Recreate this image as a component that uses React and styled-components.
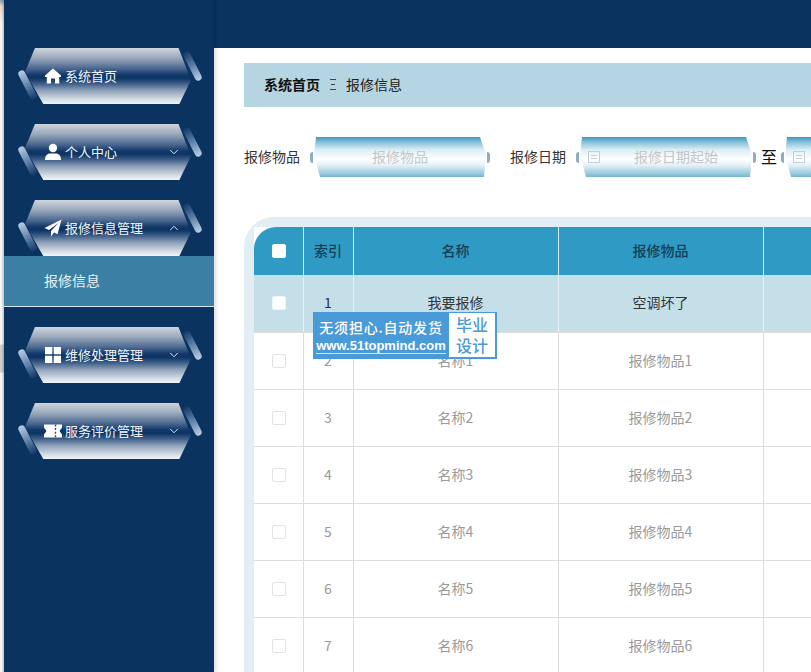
import React from "react";
import styled, { createGlobalStyle } from "styled-components";
import { ChevronDown, ChevronUp } from "lucide-react";

const FONT = `"Noto Sans CJK SC", "Noto Sans", sans-serif`;

const menus = [
  { label: "系统首页", icon: "home" },
  { label: "个人中心", icon: "user", arrow: "down" },
  { label: "报修信息管理", icon: "plane", arrow: "up", children: ["报修信息"] },
  { label: "维修处理管理", icon: "grid", arrow: "down" },
  { label: "服务评价管理", icon: "ticket", arrow: "down" },
];

const rows = [
  { index: 1, name: "我要报修", item: "空调坏了", active: true },
  { index: 2, name: "名称1", item: "报修物品1" },
  { index: 3, name: "名称2", item: "报修物品2" },
  { index: 4, name: "名称3", item: "报修物品3" },
  { index: 5, name: "名称4", item: "报修物品4" },
  { index: 6, name: "名称5", item: "报修物品5" },
  { index: 7, name: "名称6", item: "报修物品6" },
];

function MenuIcon({ name }) {
  if (name === "home") {
    return (
      <svg width="18" height="18" viewBox="0 0 18 18" fill="#fff">
        <path d="M9 1.5 L17 8.6 L17 10 L15.2 10 L15.2 16.5 L11 16.5 L11 11.5 L7 11.5 L7 16.5 L2.8 16.5 L2.8 10 L1 10 L1 8.6 Z" />
      </svg>
    );
  }
  if (name === "user") {
    return (
      <svg width="18" height="18" viewBox="0 0 18 18" fill="#fff">
        <circle cx="9" cy="5" r="4.2" />
        <path d="M1 17 C1 12 4 10.6 6 10.6 L12 10.6 C14 10.6 17 12 17 17 Z" />
      </svg>
    );
  }
  if (name === "plane") {
    return (
      <svg width="18" height="18" viewBox="0 0 18 18" fill="#fff">
        <path d="M17.5 0.5 L0.5 9 L5 11 L15 3.5 L7 12 L7 17.5 L10 13.6 L13.5 15.2 Z" />
      </svg>
    );
  }
  if (name === "grid") {
    return (
      <svg width="18" height="18" viewBox="0 0 18 18" fill="#fff">
        <rect x="1" y="1" width="7.3" height="7.3" />
        <rect x="9.7" y="1" width="7.3" height="7.3" />
        <rect x="1" y="9.7" width="7.3" height="7.3" />
        <rect x="9.7" y="9.7" width="7.3" height="7.3" />
      </svg>
    );
  }
  return (
    <svg width="18" height="18" viewBox="0 0 18 18" fill="#fff">
      <path d="M0 2.5 L18 2.5 L18 5.5 L15.5 9 L18 12.5 L18 15.5 L0 15.5 L0 12.5 L2.5 9 L0 5.5 Z" />
      <path d="M11.5 2.5 V15.5" stroke="#2a4a75" strokeWidth="1.4" strokeDasharray="2 1.6" fill="none" />
    </svg>
  );
}

function CalendarIcon() {
  return (
    <svg width="14" height="14" viewBox="0 0 14 14" fill="none" stroke="#c8ced2" strokeWidth="1">
      <rect x="1.5" y="1.5" width="11" height="11" />
      <path d="M4 5.5 H10 M4 8.5 H10" />
    </svg>
  );
}

function SeparatorIcon() {
  return (
    <svg width="8" height="13" viewBox="0 0 8 13" stroke="#444" strokeWidth="1">
      <path d="M1 1.5 H7 M2 6.5 H6 M1 11.5 H7" />
    </svg>
  );
}

function App() {
  return (
    <Page>
      <GlobalStyle />
      <EdgeStrip />
      <Sidebar>
        {menus.map((menu) => (
          <MenuGroup key={menu.label}>
            <MenuItem>
              <MenuShape />
              <MenuContent>
                <MenuIcon name={menu.icon} />
                <MenuLabel>{menu.label}</MenuLabel>
                {menu.arrow === "down" && <ChevronDown size={14} strokeWidth={1.5} />}
                {menu.arrow === "up" && <ChevronUp size={14} strokeWidth={1.5} />}
              </MenuContent>
            </MenuItem>
            {menu.children &&
              menu.children.map((child) => <SubItem key={child}>{child}</SubItem>)}
          </MenuGroup>
        ))}
      </Sidebar>
      <Content>
        <TopBar />
        <Main>
          <Breadcrumb>
            <CrumbHome>系统首页</CrumbHome>
            <CrumbSeparator><SeparatorIcon /></CrumbSeparator>
            <span>报修信息</span>
          </Breadcrumb>
          <SearchForm>
            <FieldLabel>报修物品</FieldLabel>
            <Field>
              <FieldBody />
              <FieldText>报修物品</FieldText>
            </Field>
            <FieldLabel $gap={24}>报修日期</FieldLabel>
            <Field $date>
              <FieldBody />
              <FieldIcon><CalendarIcon /></FieldIcon>
              <FieldText>报修日期起始</FieldText>
            </Field>
            <ToLabel>至</ToLabel>
            <Field $date>
              <FieldBody />
              <FieldIcon><CalendarIcon /></FieldIcon>
              <FieldText>报修日期结束</FieldText>
            </Field>
          </SearchForm>
          <TableCard>
            <Table>
              <colgroup>
                <col width="49" />
                <col width="50" />
                <col width="205" />
                <col width="205" />
                <col width="205" />
              </colgroup>
              <thead>
                <tr>
                  <Th><CheckBox $head /></Th>
                  <Th>索引</Th>
                  <Th>名称</Th>
                  <Th>报修物品</Th>
                  <Th />
                </tr>
              </thead>
              <tbody>
                {rows.map((row) => (
                  <Row key={row.index} $active={row.active}>
                    <Td $active={row.active}><CheckBox $active={row.active} /></Td>
                    <Td $active={row.active}>{row.index}</Td>
                    <Td $active={row.active}>{row.name}</Td>
                    <Td $active={row.active}>{row.item}</Td>
                    <Td $active={row.active} />
                  </Row>
                ))}
              </tbody>
            </Table>
          </TableCard>
          <Promo>
            <PromoText>
              <PromoTitle>无须担心.自动发货</PromoTitle>
              <PromoUrl>www.51topmind.com</PromoUrl>
            </PromoText>
            <PromoBadge>毕业<br />设计</PromoBadge>
          </Promo>
        </Main>
      </Content>
    </Page>
  );
}

const GlobalStyle = createGlobalStyle`
  html, body {
    margin: 0;
    padding: 0;
    height: 100%;
    overflow: hidden;
    background: #fff;
  }
  * {
    box-sizing: border-box;
  }
`;

const Page = styled.div`
  display: flex;
  width: 811px;
  height: 672px;
  overflow: hidden;
  font-family: ${FONT};
`;

const EdgeStrip = styled.div`
  flex: 0 0 4px;
  background:
    linear-gradient(90deg, rgba(0, 0, 0, 0) 30%, rgba(0, 0, 0, 0.2) 100%),
    linear-gradient(
      180deg,
      #7f9fbd 0,
      #ecd9c6 6px,
      #f6f6f6 24px,
      #f6f6f6 344px,
      #cfcfcf 345px,
      #cfcfcf 372px,
      #f6f6f6 373px,
      #f6f6f6 100%
    );
`;

const Sidebar = styled.nav`
  flex: 0 0 210px;
  padding-top: 48px;
  background: #0a3360;
  box-shadow: 2px 0 4px rgba(0, 0, 0, 0.14);
  position: relative;
  z-index: 1;
`;

const MenuGroup = styled.div`
  margin-bottom: 20px;
`;

const MenuItem = styled.div`
  position: relative;
  height: 56px;
  margin-left: 21px;
  width: 166px;
  &::before,
  &::after {
    content: "";
    position: absolute;
    width: 7px;
    height: 32px;
    border-radius: 4px;
    transform: rotate(-27deg);
  }
  &::before {
    left: -1px;
    top: 21px;
    background: linear-gradient(180deg, #b9cde4 0%, #6d8db3 45%, #0f3665 100%);
  }
  &::after {
    right: -5px;
    top: 2px;
    background: linear-gradient(180deg, #0f3665 0%, #5f82ab 50%, #bccfe4 100%);
  }
`;

const MenuShape = styled.div`
  position: absolute;
  inset: 0;
  clip-path: polygon(6% 0, 92.5% 0, 100% 57%, 93% 100%, 11% 100%, 0 43%);
  background: linear-gradient(
    180deg,
    #cfd5dd 0%,
    #9aa9bc 18%,
    #4d6a91 36%,
    #12386a 48%,
    #0c3463 54%,
    #3f5f88 64%,
    #8fa2b9 76%,
    #cdd6e1 90%,
    #f0f6fb 100%
  );
`;

const MenuContent = styled.div`
  position: relative;
  display: flex;
  align-items: center;
  height: 100%;
  padding: 0 10px 0 19px;
  color: #fff;
  svg {
    flex: none;
  }
`;

const MenuLabel = styled.span`
  flex: 1;
  margin-left: 3px;
  font-size: 13px;
  line-height: 18px;
  color: #f2f6fa;
`;

const SubItem = styled.div`
  display: flex;
  align-items: center;
  height: 51px;
  padding: 0 0 3px 40px;
  font-size: 14px;
  color: #eaf2f6;
  background: #3b80a4;
  border-bottom: 1px solid #d8e8f0;
`;

const Content = styled.div`
  flex: 1;
  min-width: 0;
  display: flex;
  flex-direction: column;
`;

const TopBar = styled.div`
  flex: 0 0 48px;
  background: #0a3360;
`;

const Main = styled.main`
  position: relative;
  flex: 1;
  padding: 15px 0 0 30px;
  overflow: hidden;
  background: #fff;
`;

const Breadcrumb = styled.div`
  display: flex;
  align-items: center;
  width: 700px;
  height: 44px;
  padding: 0 0 2px 20px;
  font-size: 14px;
  color: #222;
  background: #b4d5e1;
`;

const CrumbHome = styled.span`
  font-weight: 700;
  color: #111;
`;

const CrumbSeparator = styled.span`
  display: flex;
  justify-content: center;
  width: 26px;
`;

const SearchForm = styled.div`
  display: flex;
  align-items: center;
  height: 40px;
  margin-top: 30px;
  width: 900px;
`;

const FieldLabel = styled.span`
  margin-left: ${(p) => p.$gap || 0}px;
  margin-right: 14px;
  padding-bottom: 2px;
  font-size: 14px;
  color: #333;
`;

const ToLabel = styled.span`
  margin: 0 8px 0 9px;
  padding-bottom: 2px;
  font-size: 16px;
  color: #111;
`;

const Field = styled.div`
  position: relative;
  flex: none;
  display: flex;
  align-items: center;
  justify-content: center;
  width: 172px;
  height: 40px;
  padding: 0 0 2px ${(p) => (p.$date ? 20 : 0)}px;
  &::before,
  &::after {
    content: "";
    position: absolute;
    top: 15px;
    width: 3px;
    height: 11px;
    background: #8fadbd;
  }
  &::before {
    left: -4px;
    border-radius: 3px 0 0 3px;
  }
  &::after {
    right: -4px;
    border-radius: 0 3px 3px 0;
  }
`;

const FieldBody = styled.div`
  position: absolute;
  inset: 0;
  clip-path: polygon(2px 0, calc(100% - 6px) 0, 100% 45%, calc(100% - 2px) 100%, 6px 100%, 0 45%);
  background: linear-gradient(
    180deg,
    #3a9ac4 0%,
    #8cc3da 14%,
    #dceef5 32%,
    #ffffff 55%,
    #e6f2f7 70%,
    #a5d0e2 88%,
    #73b5d0 100%
  );
`;

const FieldText = styled.span`
  position: relative;
  font-size: 14px;
  color: #c4c6c8;
`;

const FieldIcon = styled.span`
  position: absolute;
  z-index: 1;
  left: 7px;
  top: 13px;
  display: flex;
`;

const TableCard = styled.div`
  width: 700px;
  margin-top: 40px;
  padding: 10px 0 0 10px;
  border-radius: 30px 0 0 0;
  background: #e2edf4;
  height: 500px;
`;

const Table = styled.table`
  width: 714px;
  table-layout: fixed;
  border-collapse: collapse;
  background: #fff;
`;

const Th = styled.th`
  height: 48px;
  padding: 0 0 3px;
  font-size: 14px;
  font-weight: 500;
  color: #153f58;
  background: #2f9ac4;
  border-left: 1px solid #d6ecf4;
  &:first-child {
    border-left: 0;
    border-top-left-radius: 22px;
  }
`;

const Row = styled.tr`
  height: 57px;
  background: ${(p) => (p.$active ? "#c5dfe9" : "#fff")};
`;

const Td = styled.td`
  padding: 0 0 2px;
  text-align: center;
  font-size: 14px;
  color: ${(p) => (p.$active ? "#333" : "#9a9a9a")};
  border-left: 1px solid ${(p) => (p.$active ? "#e4f0f5" : "#ddd")};
  border-bottom: 1px solid #ddd;
  &:first-child {
    border-left: 0;
  }
`;

const CheckBox = styled.span`
  display: block;
  width: 14px;
  height: 14px;
  margin: 2px auto 0 18px;
  border-radius: 2px;
  background: #fff;
  border: 1px solid ${(p) => (p.$head ? "#fff" : p.$active ? "#eef5f8" : "#e2e2e2")};
`;

const Promo = styled.div`
  position: absolute;
  left: 99px;
  top: 264px;
  display: flex;
  width: 184px;
  height: 47px;
  padding: 1px 2px 2px 0;
  background: #4a9ad8;
  color: #fff;
`;

const PromoText = styled.div`
  flex: 1;
  min-width: 0;
  display: flex;
  flex-direction: column;
  align-items: center;
  justify-content: center;
`;

const PromoTitle = styled.div`
  font-size: 14px;
  font-weight: 500;
  letter-spacing: 0.8px;
  line-height: 22px;
  white-space: nowrap;
`;

const PromoUrl = styled.div`
  font-family: "Liberation Sans", sans-serif;
  font-size: 13px;
  line-height: 15px;
  font-weight: 700;
  border-bottom: 1px solid #cfe4f5;
  white-space: nowrap;
`;

const PromoBadge = styled.div`
  flex: 0 0 46px;
  padding-top: 1px;
  background: #fff;
  color: #4a9ad8;
  font-size: 16px;
  font-weight: 500;
  line-height: 21px;
  text-align: center;
`;

export default App;
